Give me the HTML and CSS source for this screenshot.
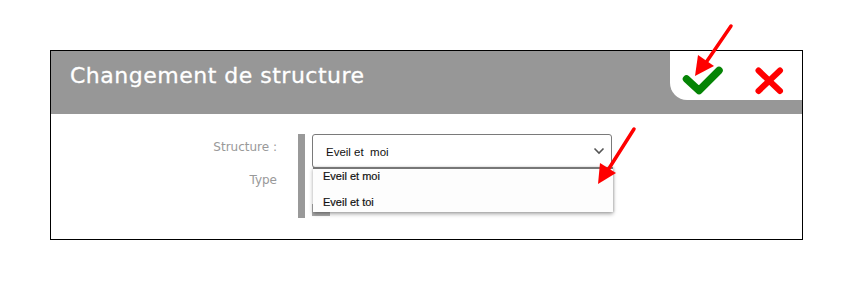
FILE: index.html
```html
<!DOCTYPE html>
<html lang="fr">
<head>
<meta charset="utf-8">
<title>Changement de structure</title>
<link rel="stylesheet" href="styles.css">
</head>
<body>
<div class="panel">
  <div class="header">
    <h1 class="title">Changement de structure</h1>
    <div class="actions">
      <svg class="icon-ok" width="44" height="34" viewBox="0 0 44 34"><polyline points="4.5,13 17,24.5 37,4.5" fill="none" stroke="#058405" stroke-width="7.5" stroke-linecap="round" stroke-linejoin="round"/></svg>
      <svg class="icon-cancel" width="32" height="30" viewBox="0 0 32 30"><path d="M5.5 4.5 L27 25 M27 4.5 L5.5 25" fill="none" stroke="#ff0000" stroke-width="6" stroke-linecap="round"/></svg>
    </div>
  </div>
  <div class="content">
    <div class="labels">
      <div class="label label-structure">Structure :</div>
      <div class="label label-type">Type</div>
    </div>
    <div class="bar"></div>
    <div class="fields">
      <div class="select">
        <span class="select-value">Eveil et&nbsp; moi</span>
        <svg class="chevron" width="12" height="8" viewBox="0 0 12 8"><polyline points="1.5,1.5 6,6 10.5,1.5" fill="none" stroke="#555" stroke-width="1.6"/></svg>
      </div>
      <div class="type-row">
        <span class="type-box"></span>
      </div>
      <ul class="dropdown">
        <li class="option">Eveil et moi</li>
        <li class="option">Eveil et toi</li>
      </ul>
    </div>
  </div>
</div>
<svg class="arrows" width="853" height="290" viewBox="0 0 853 290">
  <line x1="731" y1="26" x2="705" y2="64" stroke="#ff0000" stroke-width="3.5" stroke-linecap="round"/>
  <polygon points="695,76 698,55 714,66" fill="#ff0000"/>
  <line x1="634" y1="129" x2="608" y2="170" stroke="#ff0000" stroke-width="3.5" stroke-linecap="round"/>
  <polygon points="598,184 600,163 616,173" fill="#ff0000"/>
</svg>
</body>
</html>
```

FILE: styles.css
```css
* { box-sizing: border-box; }
html, body { margin: 0; padding: 0; background: #fff; }
body { width: 853px; height: 290px; position: relative; font-family: "Liberation Sans", Arial, sans-serif; }

.panel {
  margin: 50px 0 0 50px;
  width: 753px;
  height: 190px;
  border: 1px solid #000;
  background: #fff;
}

.header {
  height: 63px;
  background: #979797;
  display: flex;
  align-items: flex-start;
  justify-content: space-between;
}

.title {
  margin: 0;
  padding: 12px 0 0 19px;
  font-family: "DejaVu Sans", sans-serif;
  font-weight: normal;
  font-size: 22px;
  letter-spacing: 0.5px;
  color: #fff;
  -webkit-text-stroke: 0.3px #fff;
}

.actions {
  width: 132px;
  height: 49px;
  background: #fff;
  border-bottom-left-radius: 17px;
  display: flex;
  align-items: flex-start;
  padding: 15px 0 0 12px;
  gap: 27px;
}

.content {
  display: flex;
  padding-top: 20px;
}

.labels {
  width: 226px;
  text-align: right;
  font-family: "DejaVu Sans", sans-serif;
  font-size: 12px;
  color: #999;
}
.label-structure { padding-top: 6px; height: 36px; }
.label-type { padding-top: 3px; }

.bar {
  width: 7px;
  height: 84px;
  background: #999;
  margin-left: 21px;
}

.fields {
  position: relative;
  margin-left: 7px;
  width: 300px;
}

.select {
  height: 34px;
  border: 1px solid #7a7a7a;
  border-radius: 3px;
  display: flex;
  align-items: center;
  justify-content: space-between;
  padding: 2px 6px 0 13px;
  font-size: 11.5px;
  color: #111;
}
.chevron { margin-top: -3px; }

.type-row {
  display: flex;
  align-items: flex-start;
  margin-top: 36px;
}
.type-box { width: 18px; height: 12px; background: #aaa; }

.dropdown {
  position: absolute;
  top: 33px;
  left: 1px;
  width: 300px;
  height: 45px;
  margin: 0;
  padding: 0;
  list-style: none;
  background: #fdfdfd;
  border-top: 2px solid #777;
  box-shadow: 0 2px 4px rgba(0,0,0,0.35), 1px 0 2px rgba(0,0,0,0.15);
}
.option {
  height: 26px;
  padding: 1px 0 0 10px;
  font-size: 11px;
  color: #111;
  -webkit-text-stroke: 0.2px #111;
}

.arrows { position: absolute; left: 0; top: 0; pointer-events: none; }
```
